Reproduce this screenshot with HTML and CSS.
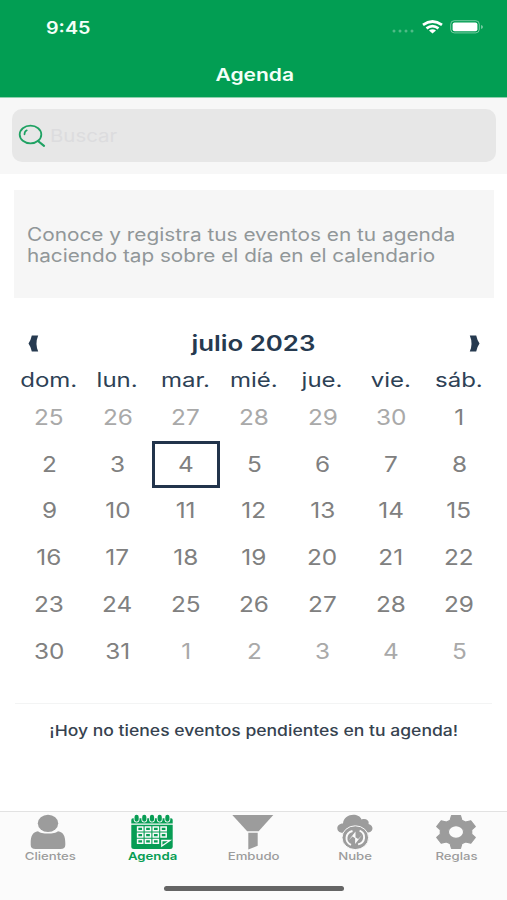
FILE: index.html
```html
<!DOCTYPE html>
<html lang="es">
<head>
<meta charset="utf-8">
<title>Agenda</title>
<link rel="stylesheet" href="styles.css">
</head>
<body>
<div class="app">
  <header class="header">
    <div class="status">
      <span class="wide time">9:45</span>
      <div class="status-icons">
        <svg class="signal" width="23" height="4" viewBox="0 0 23 4"><g fill="#fff" opacity=".3"><circle cx="2" cy="2" r="1.500"/><circle cx="8" cy="2" r="1.500"/><circle cx="14" cy="2" r="1.500"/><circle cx="20" cy="2" r="1.500"/></g></svg>
        <svg class="wifi" width="21" height="14" viewBox="0 0 21 14"><g fill="none" stroke="#fff" stroke-width="2.700"><path d="M1 4.900Q10.500 -1.900 20 4.900"/><path d="M4.500 8.400Q10.500 3.900 16.500 8.400"/></g><path d="M7 10.600Q10.500 8 14 10.600L10.500 13.500Z" fill="#fff"/></svg>
        <svg class="battery" width="34" height="14" viewBox="0 0 34 14"><rect x=".7" y=".7" width="28.600" height="12.200" rx="3.600" fill="none" stroke="#fff" stroke-width="1" opacity=".45"/><rect x="2.600" y="2.400" width="24.800" height="8.900" rx="2" fill="#fff"/><path d="M31 5v4q2-.5 2-2t-2-2z" fill="#fff" opacity=".45"/></svg>
      </div>
    </div>
    <h1 class="title"><span class="wide">Agenda</span></h1>
  </header>

  <div class="search">
    <div class="field">
      <svg width="28" height="24" viewBox="0 0 28 24" fill="none" stroke="#1fa263" stroke-linecap="round"><ellipse cx="12.500" cy="10.500" rx="10.800" ry="8.900" stroke-width="1.800"/><path d="M6.500 10.300Q6.500 7.300 8.800 6.300" stroke-width="1.700"/><path d="M20 17L26 21.800" stroke-width="2.200"/></svg>
      <span class="wide placeholder">Buscar</span>
    </div>
  </div>

  <main class="main">
    <p class="info"><span class="wide">Conoce y registra tus eventos en tu agenda</span><span class="wide second">haciendo tap sobre el día en el calendario</span></p>

    <section class="calendar">
      <div class="month">
        <svg width="11" height="17" viewBox="0 0 11 17"><path d="M3.800 .5H10.200Q6.800 8.500 10.200 16.500H3.800Q2.700 11.500 .5 8.500Q2.700 5.500 3.800 .5Z" fill="#263a50"/></svg>
        <h2><span class="wide">julio 2023</span></h2>
        <svg width="11" height="17" viewBox="0 0 11 17"><path d="M7.200 .5H.8Q4.200 8.500 .8 16.500H7.200Q8.300 11.500 10.500 8.500Q8.300 5.500 7.200 .5Z" fill="#263a50"/></svg>
      </div>
      <div class="row weekdays">
        <span class="wide">dom.</span><span class="wide">lun.</span><span class="wide">mar.</span><span class="wide">mié.</span><span class="wide">jue.</span><span class="wide">vie.</span><span class="wide">sáb.</span>
      </div>
      <div class="row days">
        <div class="out"><span class="wide">25</span></div><div class="out"><span class="wide">26</span></div><div class="out"><span class="wide">27</span></div><div class="out"><span class="wide">28</span></div><div class="out"><span class="wide">29</span></div><div class="out"><span class="wide">30</span></div><div><span class="wide">1</span></div>
        <div><span class="wide">2</span></div><div><span class="wide">3</span></div><div class="today"><span class="wide">4</span></div><div><span class="wide">5</span></div><div><span class="wide">6</span></div><div><span class="wide">7</span></div><div><span class="wide">8</span></div>
        <div><span class="wide">9</span></div><div><span class="wide">10</span></div><div><span class="wide">11</span></div><div><span class="wide">12</span></div><div><span class="wide">13</span></div><div><span class="wide">14</span></div><div><span class="wide">15</span></div>
        <div><span class="wide">16</span></div><div><span class="wide">17</span></div><div><span class="wide">18</span></div><div><span class="wide">19</span></div><div><span class="wide">20</span></div><div><span class="wide">21</span></div><div><span class="wide">22</span></div>
        <div><span class="wide">23</span></div><div><span class="wide">24</span></div><div><span class="wide">25</span></div><div><span class="wide">26</span></div><div><span class="wide">27</span></div><div><span class="wide">28</span></div><div><span class="wide">29</span></div>
        <div><span class="wide">30</span></div><div><span class="wide">31</span></div><div class="out"><span class="wide">1</span></div><div class="out"><span class="wide">2</span></div><div class="out"><span class="wide">3</span></div><div class="out"><span class="wide">4</span></div><div class="out"><span class="wide">5</span></div>
      </div>
    </section>

    <p class="empty"><span class="wide">¡Hoy no tienes eventos pendientes en tu agenda!</span></p>
  </main>

  <nav class="tabs">
    <div class="tab tab-clients">
      <svg width="44" height="36" viewBox="0 0 44 36" fill="#9c9c9c"><ellipse cx="22" cy="9.300" rx="10.200" ry="8.600"/><path d="M4.700 29C4.700 22.500 6.500 17.800 12 17.200C15 20.300 29 20.300 32 17.200C37.500 17.800 39.300 22.500 39.300 29V31Q39.300 35 34.500 35H9.500Q4.700 35 4.700 31Z"/></svg>
      <span class="wide">Clientes</span>
    </div>
    <div class="tab active">
      <svg width="44" height="36" viewBox="0 0 44 36"><path d="M1.300 9.500V6Q1.300 4.300 3 4.300H41Q42.700 4.300 42.700 6V9.500Z" fill="#079d54"/><path d="M1.300 10.700H42.700V32.500Q42.700 35 40 35H4Q1.300 35 1.300 32.500Z" fill="#079d54"/><g stroke="#fafafa" stroke-width="5.800" stroke-linecap="round"><path d="M6.600 3V5.500M14.300 3V5.500M22 3V5.500M29.700 3V5.500M37.400 3V5.500"/></g><g stroke="#079d54" stroke-width="4.200" stroke-linecap="round"><path d="M6.600 2.900V5.600M14.300 2.900V5.600M22 2.900V5.600M29.700 2.900V5.600M37.400 2.900V5.600"/></g><g fill="none" stroke="#fafafa" stroke-width="1.500"><path d="M7.600 13h5.200v3.800H7.600zM15.400 13h5.200v3.800h-5.200zM23.200 13h5.200v3.800h-5.200zM31 13h5.200v3.800H31zM7.600 19.200h5.200V23H7.600zM15.400 19.200h5.200V23h-5.200zM23.200 19.200h5.200V23h-5.200zM31 19.200h5.200V23H31zM7.600 25.400h5.200v3.800H7.600zM15.400 25.400h5.200v3.800h-5.200zM23.200 25.400h5.200v3.800h-5.200z"/><path d="M31.800 32V26.500H40Z" stroke-width="1.300"/></g></svg>
      <span class="wide">Agenda</span>
    </div>
    <div class="tab">
      <svg width="44" height="36" viewBox="0 0 44 36" fill="#9c9c9c"><path d="M1.300 1H42.300L27.600 17.200H16.200Z"/><path d="M17.300 18.800H26.700V31.800L17.300 35.500Z"/></svg>
      <span class="wide">Embudo</span>
    </div>
    <div class="tab">
      <svg width="44" height="36" viewBox="0 0 44 36"><path d="M9.500 18.800C2.500 18.800 2.500 9.600 10 9.600C10.500 -.8 26 -1.800 28.500 5.400C34 3.900 36.500 7.300 35.500 10C41.500 11.500 40.500 18.800 34 18.800Z" fill="#9c9c9c"/><ellipse cx="22.300" cy="23.700" rx="13.300" ry="11.900" fill="#9c9c9c" stroke="#fafafa" stroke-width="1"/><g fill="none" stroke="#fafafa" stroke-width="1.900"><path d="M18 30.800C11.500 28 12 19 19.500 17"/><path d="M26.600 16.600C33.100 19.400 32.600 28.400 25.100 30.400"/></g><path d="M22.500 17.500V24.500L19.500 22.500L15.500 26.500ZM22.100 30V23L25.100 25L29.100 21Z" fill="#fafafa"/></svg>
      <span class="wide">Nube</span>
    </div>
    <div class="tab">
      <svg width="44" height="36" viewBox="0 0 44 36"><path fill="#9c9c9c" fill-rule="evenodd" stroke="#9c9c9c" stroke-width="1.200" stroke-linejoin="round" d="M17.500 1.600H26.500L27.800 6.200L31.500 8L36.800 6.800L41.300 12.500L37.700 15.800V20.200L41.300 23.500L36.800 29.200L31.500 28L27.800 29.800L26.500 34.400H17.500L16.200 29.800L12.500 28L7.200 29.200L2.700 23.500L6.300 20.200V15.800L2.700 12.500L7.200 6.800L12.500 8L16.200 6.200ZM22 11.700A7.600 6.300 0 1 0 22 24.300A7.600 6.300 0 1 0 22 11.700Z"/></svg>
      <span class="wide">Reglas</span>
    </div>
  </nav>
  <div class="home"></div>
</div>
</body>
</html>
```
FILE: styles.css
```css
* { box-sizing: border-box; }
body { margin: 0; background: #fff; font-family: Inter, "Liberation Sans", sans-serif; }
h1, h2, p { margin: 0; }
svg { display: block; flex: none; }

.app { width: 507px; height: 900px; display: flex; flex-direction: column; overflow: hidden; }

/* Extended letterforms */
.wide { display: inline-block; white-space: nowrap; transform: scaleX(1.2); }

.header { height: 98px; background: #029e53; border-bottom: 1px solid #8fd0ae; color: #f4fff8; }
.status { height: 55px; padding: 0 23px 0 46px; display: flex; justify-content: space-between; align-items: center; }
.time { font-size: 17px; font-weight: 600; line-height: 20px; transform: scaleX(1.16); transform-origin: left; }
.status-icons { display: flex; align-items: center; margin-top: -1px; }
.signal { margin: 8px 7px 0 0; }
.wifi { margin-right: 7px; }
.title { text-align: center; font-size: 17.500px; font-weight: 600; line-height: 22px; padding: 9px 0 0 2px; }

.search { height: 76px; padding: 11px 11px 12px 12px; background: #f7f7f7; }
.field { height: 53px; border-radius: 10px; background: #e7e7e7; display: flex; align-items: center; padding-left: 6px; }
.field svg { margin-top: 1px; }
.placeholder { font-size: 17px; color: #dcdcde; margin: 1px 0 0 4px; transform-origin: left; }

.main { flex: 1; padding: 16px 13px 0 14px; }
.info { height: 108px; background: #f6f6f6; color: #919799; padding: 34px 13px 0; font-size: 18px; line-height: 21.300px; display: flex; flex-direction: column; align-items: flex-start; }
.info .wide { transform: scaleX(1.156); transform-origin: left; }
.info .second { transform: scaleX(1.15); }

.calendar { padding: 30px 0 0 1px; }
.month { height: 30px; padding: 0 14px 0 13px; display: flex; justify-content: space-between; align-items: center; color: #263a50; }
.month h2 { font-size: 21px; font-weight: 600; line-height: 30px; padding: 2px 1px 0 0; }
.month h2 .wide { transform: scaleX(1.23); }
.row { display: grid; grid-template-columns: repeat(7, 68.330px); }
.weekdays { height: 36px; line-height: 45px; justify-items: center; margin-left: -.5px; font-size: 20px; color: #2d4155; }
.days { grid-auto-rows: 46.800px; font-size: 21px; color: #808080; }
.days .wide { transform: scaleX(1.16); }
.days > div { display: flex; align-items: center; justify-content: center; }
.days .out { color: #a9a9a9; }
.days .today { border: solid #22344b; border-width: 3px 3.500px; }

.empty { margin: 28px 2px 0 1px; padding-top: 17px; border-top: 1px solid #f3f4f4; text-align: center; font-size: 15px; font-weight: 500; line-height: 20px; color: #36424f; }
.empty .wide { transform: scaleX(1.17); }

.tabs { height: 66px; background: #fbfbfb; border-top: 1px solid #e2e2e2; display: grid; grid-template-columns: repeat(5, 1fr); }
.tab { display: flex; flex-direction: column; align-items: center; padding-top: 2px; font-size: 11px; font-weight: 500; line-height: 13px; color: #9c9c9c; }
.tab-clients svg { margin-left: -6px; }
.active { color: #079d54; font-weight: 600; }
.home { height: 23px; background: #fbfbfb; padding: 9px 163px 0 164px; }
.home::before { content: ""; display: block; height: 5px; border-radius: 3px; background: #656565; }
```
